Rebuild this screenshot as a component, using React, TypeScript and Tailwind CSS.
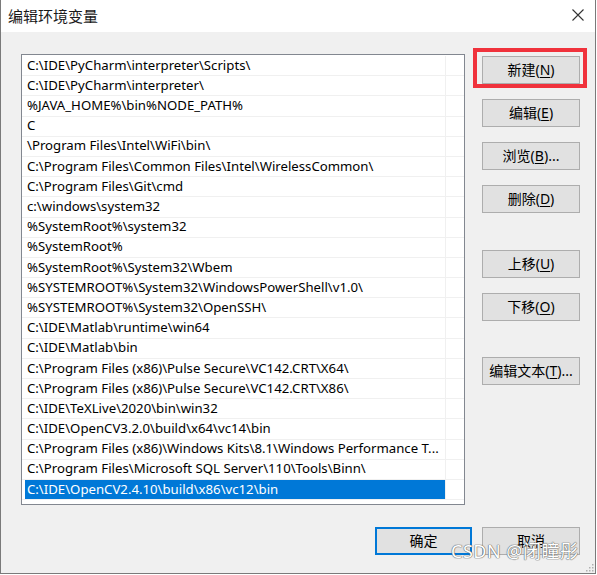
import React from 'react';

const paths = [
  'C:\\IDE\\PyCharm\\interpreter\\Scripts\\',
  'C:\\IDE\\PyCharm\\interpreter\\',
  '%JAVA_HOME%\\bin%NODE_PATH%',
  'C',
  '\\Program Files\\Intel\\WiFi\\bin\\',
  'C:\\Program Files\\Common Files\\Intel\\WirelessCommon\\',
  'C:\\Program Files\\Git\\cmd',
  'c:\\windows\\system32',
  '%SystemRoot%\\system32',
  '%SystemRoot%',
  '%SystemRoot%\\System32\\Wbem',
  '%SYSTEMROOT%\\System32\\WindowsPowerShell\\v1.0\\',
  '%SYSTEMROOT%\\System32\\OpenSSH\\',
  'C:\\IDE\\Matlab\\runtime\\win64',
  'C:\\IDE\\Matlab\\bin',
  'C:\\Program Files (x86)\\Pulse Secure\\VC142.CRT\\X64\\',
  'C:\\Program Files (x86)\\Pulse Secure\\VC142.CRT\\X86\\',
  'C:\\IDE\\TeXLive\\2020\\bin\\win32',
  'C:\\IDE\\OpenCV3.2.0\\build\\x64\\vc14\\bin',
  'C:\\Program Files (x86)\\Windows Kits\\8.1\\Windows Performance T...',
  'C:\\Program Files\\Microsoft SQL Server\\110\\Tools\\Binn\\',
  'C:\\IDE\\OpenCV2.4.10\\build\\x86\\vc12\\bin',
];

const font = { fontFamily: '"Noto Sans", "Noto Sans CJK SC", sans-serif' };

const Btn: React.FC<{ label: string; key_?: string; tail?: string; className?: string; focused?: boolean }> = ({
  label,
  key_,
  tail = '',
  className = '',
  focused,
}) => (
  <div
    className={
      'flex items-center justify-center h-[28px] bg-[#e1e1e1] text-[14px] text-black leading-none ' +
      (focused ? 'border-2 border-[#0078d7] ' : 'border border-[#adadad] ') +
      className
    }
  >
    <span>
      {label}
      {key_ !== undefined && (
        <>
          (<span className="underline underline-offset-2">{key_}</span>)
        </>
      )}
      {tail}
    </span>
  </div>
);

export default function App() {
  return (
    <div className="relative w-[597px] h-[575px] bg-white" style={font}>
      <div className="flex flex-col w-[596px] h-[574px] border-x border-b border-[#7a7a7a]">
        {/* title bar */}
        <div className="flex items-center justify-between h-[32px] bg-white pl-[7px] pr-[11px]">
          <span className="text-[15px] text-[#1a1a1a]">编辑环境变量</span>
          <svg width="12" height="12" viewBox="0 0 12 12" className="mt-[-2px]">
            <path d="M0.5 0.5 L11.5 11.5 M11.5 0.5 L0.5 11.5" stroke="#333" strokeWidth="1.1" fill="none" />
          </svg>
        </div>

        {/* body */}
        <div className="relative flex-1 flex flex-col bg-[#f0f0f0]">
          <div className="flex pl-[20px] pt-[22px]">
            <div className="w-[444px] h-[451px] border border-[#828790] bg-white pt-[1px] overflow-hidden">
              {paths.map((p, i) => {
                const sel = i === paths.length - 1;
                return (
                  <div key={i} className="flex h-[20.2px] border-b border-[#f0f0f0]">
                    <div
                      className={
                        'ml-[3px] w-[421px] pl-[2px] flex items-center text-[13.2px] whitespace-nowrap overflow-hidden border-r border-[#f0f0f0] ' +
                        (sel ? 'bg-[#0078d7] text-white' : 'text-black')
                      }
                    >
                      {p}
                    </div>
                  </div>
                );
              })}
            </div>

            <div className="ml-[17px] w-[98px] pt-[1px] flex flex-col">
              <div className="relative">
                <Btn label="新建" key_="N" className="mt-[1px]" />
                <div className="absolute left-[-9px] top-[-7px] w-[114px] h-[40px] border-[4px] border-[#f0323c] pointer-events-none" />
              </div>
              <Btn label="编辑" key_="E" className="mt-[15px]" />
              <Btn label="浏览" key_="B" tail="..." className="mt-[15px]" />
              <Btn label="删除" key_="D" className="mt-[15px]" />
              <Btn label="上移" key_="U" className="mt-[37px]" />
              <Btn label="下移" key_="O" className="mt-[15px]" />
              <Btn label="编辑文本" key_="T" tail="..." className="mt-[36px]" />
            </div>
          </div>

          <div className="flex justify-end gap-[10px] pr-[15px] mt-[22px]">
            <Btn label="确定" focused className="w-[97px]" />
            <Btn label="取消" className="w-[98px]" />
          </div>

          {/* size grip */}
          <svg width="10" height="10" viewBox="0 0 10 10" className="absolute right-[1px] bottom-[1px]">
            {[
              [8, 2],
              [8, 5],
              [5, 5],
              [8, 8],
              [5, 8],
              [2, 8],
            ].map(([x, y], i) => (
              <rect key={i} x={x} y={y} width="1.5" height="1.5" fill="#b0b0b0" />
            ))}
          </svg>
        </div>
      </div>

      {/* watermark */}
      <div
        className="absolute left-[451px] top-[538px] text-[18px] text-white tracking-[0.5px] pointer-events-none"
        style={{ textShadow: '0 0 1px #666, 0 0 1px #666, 0 0 1px #666' }}
      >
        CSDN @闭瞳彤
      </div>
    </div>
  );
}
